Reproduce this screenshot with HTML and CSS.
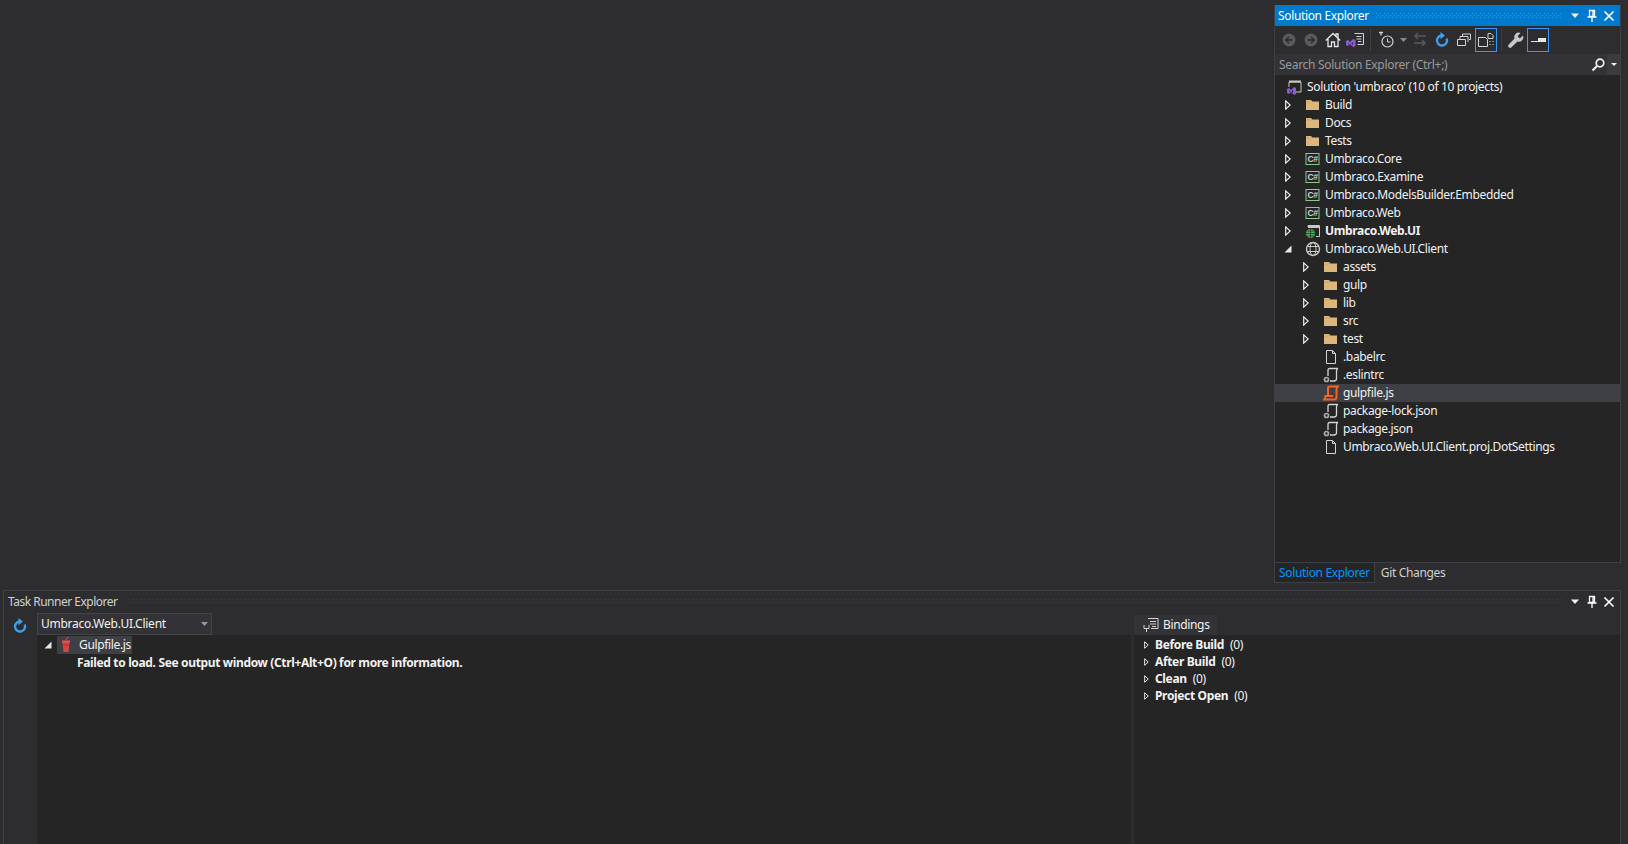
FILE: index.html
```html
<!DOCTYPE html>
<html lang="en">
<head>
<meta charset="utf-8">
<title>Visual Studio</title>
<link rel="stylesheet" href="styles.css">
</head>
<body>
<svg class="defs" width="0" height="0" aria-hidden="true">
  <defs>
    <symbol id="arrow" viewBox="0 0 6 10"><path d="M.7.9 5.200 5 .7 9.100Z" fill="none" stroke="#f0f0f0" stroke-width="1.200"/></symbol>
    <symbol id="open" viewBox="0 0 8 8"><path d="M7.500.5v7H.5Z" fill="#e6e6e6"/></symbol>
    <symbol id="folder" viewBox="0 0 16 16"><path d="M1 3h5l1.500 1.500H14V13H1Z" fill="#dcb67a"/><path d="M1.500 5h5" stroke="#c9a56c"/></symbol>
    <symbol id="cs" viewBox="0 0 16 16"><rect x="1" y="2.500" width="13" height="11" fill="#252526" stroke="#89c98a"/><text x="7.500" y="11" text-anchor="middle" font-family="Liberation Sans" font-size="8.500" font-weight="700" fill="#d0d0d0">C#</text></symbol>
    <symbol id="globe" viewBox="0 0 16 16"><g fill="none" stroke="#c8c8c8"><circle cx="8" cy="8" r="6.500" stroke-width="1.400"/><ellipse cx="8" cy="8" rx="3" ry="6.500"/><path d="M2 5.500h12M2 10.500h12"/></g></symbol>
    <symbol id="webui" viewBox="0 0 16 16"><path d="M3 4V2.500h11.500v11H11" fill="none" stroke="#c8c8c8"/><path d="M3 4h11" stroke="#c8c8c8" stroke-width="2"/><circle cx="5.500" cy="10.500" r="4.500" fill="#4fae5e"/><path d="M1 10.500h9M5.500 6v9M2 8h7M2 13h7" stroke="#252526" stroke-width=".7"/></symbol>
    <symbol id="solution" viewBox="0 0 16 16"><path d="M3 8V3h12v10H10" fill="none" stroke="#c8c8c8"/><path d="M3 2.500h12" stroke="#c8c8c8" stroke-width="2"/><path d="M1 10l2-1 2 2 3-3 2 1v6l-2 1-3-3-2 2-2-1Zm2 1.500v1.500l1-.7ZM7 11l-1.500 1.500L7 14Z" fill="#8a5bd6" fill-rule="evenodd"/></symbol>
    <symbol id="file" viewBox="0 0 16 16"><path d="M3.500 1.500h6l3 3v10h-9Z" fill="none" stroke="#d4d4d4"/><path d="M9.500 1.500v3h3" fill="none" stroke="#d4d4d4"/></symbol>
    <symbol id="script" viewBox="0 0 16 16"><path d="M5 9V3q0-1.500 1.500-1.500H15q-1.500.5-1.500 2.500v7.500q0 2.500-2.500 2.500H7" fill="none" stroke="#d4d4d4" stroke-width="1.300"/><circle cx="3.500" cy="12.500" r="2" fill="none" stroke="#a8a8a8" stroke-width="1.700"/></symbol>
    <symbol id="scriptjs" viewBox="0 0 16 16"><path d="M5 10V3q0-1.500 1.500-1.500H15q-1.500 1-1.500 2.500v8q0 2.500-2.500 2.500H1q1.500-1 1.500-3.500H10" fill="none" stroke="#f26522" stroke-width="2"/></symbol>
    <symbol id="cup" viewBox="0 0 16 16"><path d="M4.500 5h7l-1 10h-5Z" fill="#d64545"/><path d="M4 4.500h8" stroke="#e05252" stroke-width="2"/><path d="M8 4 9 .5 11 0" fill="none" stroke="#d64545"/><path d="M5 8h6" stroke="#a33636"/></symbol>
    <symbol id="refresh" viewBox="0 0 16 16"><path d="M8 3.500a5 5 0 1 0 4.600 3" fill="none" stroke="#3f9fe8" stroke-width="2.300"/><path d="M6.500 0v7.200l4.500-3.600Z" fill="#3f9fe8"/></symbol>
    <symbol id="vsdoc" viewBox="0 0 20 16"><path d="M9.500 1.500h9v11h-6" fill="none" stroke="#d4d4d4"/><path d="M11.500 4.500h5M11.500 7h5M13 9.500h3.500" stroke="#d4d4d4"/><path d="M1 9l2-1 2 2 3-3 2.500 1v6L8 15l-3-3-2 2-2-1Zm2 2v1.500l1-.7ZM8 10l-1.500 1.500L8 13Z" fill="#8a5bd6" fill-rule="evenodd"/></symbol>
    <symbol id="caret" viewBox="0 0 10 6"><path d="M1 .5h8L5 5Z" fill="#f1f1f1"/></symbol>
    <symbol id="pin" viewBox="0 0 12 14"><path d="M3.500 1.500h5v6h-5ZM7 1.500v6M1.500 8h9M6 8v5" fill="none" stroke="#fff" stroke-width="1.300"/></symbol>
    <symbol id="close" viewBox="0 0 12 12"><path d="M1.500 1.500l9 9M10.500 1.500l-9 9" stroke="#fff" stroke-width="1.700"/></symbol>
  </defs>
</svg>

<main class="app">
  <section class="top">
    <div class="se">
      <div class="se-main">
        <header class="title title-active">
          <span class="title-text">Solution Explorer</span>
          <span class="gripper gripper-blue"></span>
          <svg class="win-btn caret-btn"><use href="#caret"/></svg>
          <svg class="win-btn pin-btn"><use href="#pin"/></svg>
          <svg class="win-btn close-btn"><use href="#close"/></svg>
        </header>
        <div class="toolbar">
          <span class="tb"><svg width="16" height="16" viewBox="0 0 16 16"><circle cx="8" cy="8" r="6.500" fill="#5a5a5c"/><path d="M11.500 8h-6M8 5 5 8l3 3" fill="none" stroke="#2d2d30" stroke-width="1.600"/></svg></span>
          <span class="tb"><svg width="16" height="16" viewBox="0 0 16 16"><circle cx="8" cy="8" r="6.500" fill="#5a5a5c"/><path d="M4.500 8h6M8 5l3 3-3 3" fill="none" stroke="#2d2d30" stroke-width="1.600"/></svg></span>
          <span class="tb"><svg width="16" height="16" viewBox="0 0 16 16"><path d="M.8 8.500 8 1.500l7.200 7M3 7v7.500h3.500V10h3v4.500H13V7M11 4V2h2v4" fill="none" stroke="#e6e6e6" stroke-width="1.300"/></svg></span>
          <span class="tb"><svg width="20" height="16"><use href="#vsdoc"/></svg></span>
          <span class="tb-sep"></span>
          <span class="tb tb-clock"><svg width="18" height="18" viewBox="0 0 18 18"><path d="M1 1.500h4M3 1.500v3" stroke="#d4d4d4" stroke-width="1.300"/><circle cx="9.500" cy="10.500" r="5.500" fill="none" stroke="#d4d4d4" stroke-width="1.200"/><path d="M9.500 7.500v3.500h3" fill="none" stroke="#d4d4d4"/></svg></span>
          <span class="tb-caret"><svg width="7" height="4" viewBox="0 0 7 4"><path d="M0 0h7L3.500 4Z" fill="#8a8a8a"/></svg></span>
          <span class="tb"><svg width="16" height="16" viewBox="0 0 16 16"><path d="M14 4H3M6 1 3 4l3 3M2 11h11M10 8l3 3-3 3" fill="none" stroke="#5a5a5c" stroke-width="1.500"/></svg></span>
          <span class="tb"><svg width="16" height="16"><use href="#refresh"/></svg></span>
          <span class="tb"><svg width="16" height="16" viewBox="0 0 16 16"><path d="M1.500 7.500h8v6h-8ZM4 7V4.500h8V10M6.500 4V2h8v5.500H13" fill="none" stroke="#d4d4d4"/></svg></span>
          <span class="tb tb-on"><svg width="16" height="16" viewBox="0 0 16 16"><path d="M.5 5.500h7l2 2v7h-9Z" fill="none" stroke="#d4d4d4"/><path d="M10 1.500h3l2 2v3h-5Z" fill="none" stroke="#d4d4d4"/><path d="M12 9v1M12 12v1M15 9v1M15 12v1" stroke="#d4d4d4"/></svg></span>
          <span class="tb-sep tb-sep-narrow"></span>
          <span class="tb"><svg width="16" height="16" viewBox="0 0 16 16"><path d="M15 3.500 11.800 6.500 9.500 4.300 12.500 1A4.500 4.500 0 0 0 6.500 6.500L.8 12.500a1.800 1.800 0 0 0 2.700 2.700l6-5.700A4.500 4.500 0 0 0 15 3.500Z" fill="#c8c8c8"/></svg></span>
          <span class="tb tb-on"><svg width="15" height="5" viewBox="0 0 15 5"><path d="M0 3.500h15" stroke="#e6e6e6"/><path d="M7 0h8v4H7Z" fill="#e6e6e6"/></svg></span>
        </div>
        <div class="search">
          <span class="search-text">Search Solution Explorer (Ctrl+;)</span>
          <svg class="search-icon" width="14" height="14" viewBox="0 0 14 14"><circle cx="9" cy="5" r="3.800" fill="none" stroke="#f1f1f1" stroke-width="1.700"/><path d="M6 8 1.500 12.500" stroke="#f1f1f1" stroke-width="2.200"/></svg>
          <span class="search-drop"><svg width="6" height="3" viewBox="0 0 6 3"><path d="M0 0h6L3 3Z" fill="#f1f1f1"/></svg></span>
        </div>
        <ul class="tree">
          <li class="row row-solution"><svg class="ico"><use href="#solution"/></svg><span>Solution 'umbraco' (10 of 10 projects)</span></li>
          <li class="row"><svg class="arr"><use href="#arrow"/></svg><svg class="ico"><use href="#folder"/></svg><span>Build</span></li>
          <li class="row"><svg class="arr"><use href="#arrow"/></svg><svg class="ico"><use href="#folder"/></svg><span>Docs</span></li>
          <li class="row"><svg class="arr"><use href="#arrow"/></svg><svg class="ico"><use href="#folder"/></svg><span>Tests</span></li>
          <li class="row"><svg class="arr"><use href="#arrow"/></svg><svg class="ico"><use href="#cs"/></svg><span>Umbraco.Core</span></li>
          <li class="row"><svg class="arr"><use href="#arrow"/></svg><svg class="ico"><use href="#cs"/></svg><span>Umbraco.Examine</span></li>
          <li class="row"><svg class="arr"><use href="#arrow"/></svg><svg class="ico"><use href="#cs"/></svg><span>Umbraco.ModelsBuilder.Embedded</span></li>
          <li class="row"><svg class="arr"><use href="#arrow"/></svg><svg class="ico"><use href="#cs"/></svg><span>Umbraco.Web</span></li>
          <li class="row"><svg class="arr"><use href="#arrow"/></svg><svg class="ico"><use href="#webui"/></svg><strong>Umbraco.Web.UI</strong></li>
          <li class="row"><svg class="arr arr-open"><use href="#open"/></svg><svg class="ico"><use href="#globe"/></svg><span>Umbraco.Web.UI.Client</span></li>
          <li class="row lvl1"><svg class="arr"><use href="#arrow"/></svg><svg class="ico"><use href="#folder"/></svg><span>assets</span></li>
          <li class="row lvl1"><svg class="arr"><use href="#arrow"/></svg><svg class="ico"><use href="#folder"/></svg><span>gulp</span></li>
          <li class="row lvl1"><svg class="arr"><use href="#arrow"/></svg><svg class="ico"><use href="#folder"/></svg><span>lib</span></li>
          <li class="row lvl1"><svg class="arr"><use href="#arrow"/></svg><svg class="ico"><use href="#folder"/></svg><span>src</span></li>
          <li class="row lvl1"><svg class="arr"><use href="#arrow"/></svg><svg class="ico"><use href="#folder"/></svg><span>test</span></li>
          <li class="row lvl1 leaf"><svg class="ico"><use href="#file"/></svg><span>.babelrc</span></li>
          <li class="row lvl1 leaf"><svg class="ico"><use href="#script"/></svg><span>.eslintrc</span></li>
          <li class="row lvl1 leaf row-selected"><svg class="ico"><use href="#scriptjs"/></svg><span>gulpfile.js</span></li>
          <li class="row lvl1 leaf"><svg class="ico"><use href="#script"/></svg><span>package-lock.json</span></li>
          <li class="row lvl1 leaf"><svg class="ico"><use href="#script"/></svg><span>package.json</span></li>
          <li class="row lvl1 leaf"><svg class="ico"><use href="#file"/></svg><span>Umbraco.Web.UI.Client.proj.DotSettings</span></li>
        </ul>
      </div>
      <nav class="tabs">
        <span class="tab tab-active">Solution Explorer</span>
        <span class="tab">Git Changes</span>
      </nav>
    </div>
  </section>

  <section class="trx">
    <header class="title">
      <span class="title-text trx-title-text">Task Runner Explorer</span>
      <span class="gripper"></span>
      <svg class="win-btn caret-btn"><use href="#caret"/></svg>
      <svg class="win-btn pin-btn"><use href="#pin"/></svg>
      <svg class="win-btn close-btn"><use href="#close"/></svg>
    </header>
    <div class="trx-body">
      <div class="rail"><svg class="rail-icon" width="16" height="16"><use href="#refresh"/></svg></div>
      <div class="tasks">
        <div class="combo-bar">
          <div class="combo"><span class="combo-text">Umbraco.Web.UI.Client</span><svg width="7" height="4" viewBox="0 0 7 4"><path d="M0 0h7L3.500 4Z" fill="#999"/></svg></div>
        </div>
        <div class="task-tree">
          <div class="task-row">
            <svg class="task-arr"><use href="#open"/></svg>
            <span class="task-sel"><svg class="ico"><use href="#cup"/></svg><span>Gulpfile.js</span></span>
          </div>
          <div class="task-error">Failed to load. See output window (Ctrl+Alt+O) for more information.</div>
        </div>
      </div>
      <div class="bindings">
        <div class="bind-bar">
          <span class="bind-tab"><svg width="16" height="16" viewBox="0 0 16 16"><path d="M5 1.500h10v10H8M7 4.500h6M7 7h6M9 9.500h4" fill="none" stroke="#d4d4d4"/><path d="M1 8v3.500h5V8M3.500 11.500V15" fill="none" stroke="#d4d4d4"/></svg><span>Bindings</span></span>
        </div>
        <ul class="bind-list">
          <li class="bind-row"><svg class="arr"><use href="#arrow"/></svg><strong>Before Build</strong><span>(0)</span></li>
          <li class="bind-row"><svg class="arr"><use href="#arrow"/></svg><strong>After Build</strong><span>(0)</span></li>
          <li class="bind-row"><svg class="arr"><use href="#arrow"/></svg><strong>Clean</strong><span>(0)</span></li>
          <li class="bind-row"><svg class="arr"><use href="#arrow"/></svg><strong>Project Open</strong><span>(0)</span></li>
        </ul>
      </div>
    </div>
  </section>
</main>
</body>
</html>
```

FILE: styles.css
```css
* { box-sizing: border-box; }
html, body { margin: 0; height: 100%; }
body {
  background: #2d2d30;
  color: #f1f1f1;
  font: 12px/16px "Noto Sans", "Liberation Sans", sans-serif;
  letter-spacing: -0.35px;
  overflow: hidden;
}
ul { list-style: none; margin: 0; padding: 0; }
svg { display: block; flex: none; }
.defs { position: absolute; }

.app {
  height: 844px;
  display: flex;
  flex-direction: column;
  padding: 5px 7px 0 3px;
}

.top { height: 578px; display: flex; justify-content: flex-end; }
.se { width: 347px; display: flex; flex-direction: column; }
.se-main {
  height: 558px;
  display: flex;
  flex-direction: column;
  border: 1px solid #3f3f46;
  border-top: 0;
}

.title {
  height: 21px;
  flex: none;
  display: flex;
  align-items: center;
  padding: 0 5px 0 4px;
  color: #d0d0d0;
}
.title-active { background: #007acc; color: #fff; padding-left: 3px; }
.title-text { white-space: nowrap; }
.trx-title-text { letter-spacing: -0.5px; }
.gripper {
  flex: 1;
  height: 5px;
  margin: 0 8px 0 7px;
  --dot: #3e3e42;
  background:
    linear-gradient(90deg, var(--dot) 1px, transparent 1px) 0 0 / 4px 1px repeat-x,
    linear-gradient(90deg, var(--dot) 1px, transparent 1px) 2px 2px / 4px 1px repeat-x,
    linear-gradient(90deg, var(--dot) 1px, transparent 1px) 0 4px / 4px 1px repeat-x;
}
.gripper-blue { --dot: #3b9ad9; }
.win-btn { width: 10px; height: 6px; }
.pin-btn { width: 12px; height: 14px; margin-left: 6px; }
.close-btn { width: 12px; height: 12px; margin-left: 5px; }

.toolbar {
  height: 28px;
  flex: none;
  display: flex;
  align-items: center;
  padding-left: 3px;
}
.tb {
  width: 22px;
  height: 24px;
  display: flex;
  align-items: center;
  justify-content: center;
}
.tb-on { border: 1px solid #3399ff; background: #2d2d30; }
.tb-sep { width: 1px; height: 22px; background: #3f3f46; margin: 0 5px 0 4px; }
.tb-sep-narrow { margin: 0 3px 0 4px; }
.tb-caret { width: 10px; display: flex; justify-content: center; margin-right: 1px; }

.search {
  height: 21px;
  flex: none;
  display: flex;
  align-items: center;
  background: #333337;
  padding-left: 4px;
  color: #999;
  letter-spacing: -0.3px;
}
.search-text { flex: 1; }
.search-icon { margin-right: 2px; }
.search-drop {
  width: 13px;
  align-self: stretch;
  display: flex;
  align-items: center;
  justify-content: center;
  background: #3a3a3f;
}

.tree {
  flex: 1;
  background: #252526;
  padding-top: 3px;
}
.row {
  height: 18px;
  display: flex;
  align-items: center;
  padding-left: 10px;
  white-space: nowrap;
}
.row strong { font-weight: 700; }
.ico { width: 16px; height: 16px; margin-right: 4px; }
.arr { width: 6px; height: 10px; margin-right: 14px; }
.arr-open { height: 8px; width: 8px; margin-left: -1px; margin-right: 13px; }
.row-solution { padding-left: 11px; }
.row-solution .ico { margin-right: 5px; }
.lvl1 { padding-left: 28px; }
.leaf { padding-left: 48px; }
.row-selected { background: #3f3f46; }

.tabs {
  height: 20px;
  flex: none;
  display: flex;
}
.tab {
  padding: 0 6px;
  display: flex;
  align-items: center;
  color: #d0d0d0;
}
.tab-active {
  background: #252526;
  color: #0097fb;
  border: 1px solid #3f3f46;
  border-top: 0;
  padding: 0 4px;
}

.trx {
  margin-top: 7px;
  flex: 1;
  min-height: 0;
  display: flex;
  flex-direction: column;
  border: 1px solid #3f3f46;
  border-bottom: 0;
}
.trx-body { flex: 1; min-height: 0; display: flex; }
.rail { width: 33px; flex: none; padding: 5px 0 0 8px; }
.rail-icon { margin-top: 1px; }

.tasks { width: 1094px; flex: none; display: flex; flex-direction: column; }
.combo-bar { height: 23px; flex: none; }
.combo {
  width: 175px;
  height: 22px;
  margin-top: 1px;
  display: flex;
  align-items: center;
  justify-content: space-between;
  border: 1px solid #434346;
  background: #333337;
  padding: 0 3px 0 3px;
  letter-spacing: -0.25px;
}
.task-tree { flex: 1; background: #252526; padding-top: 1px; }
.task-row { height: 18px; display: flex; align-items: center; padding-left: 7px; }
.task-arr { width: 8px; height: 8px; margin-right: 5px; }
.task-sel {
  display: flex;
  align-items: center;
  height: 18px;
  padding-right: 1px;
  background: #3f3f46;
}
.task-sel .ico { margin: 0 4px 0 1px; }
.task-sel span { margin-left: 1px; }
.task-error { padding-left: 40px; font-weight: 700; height: 18px; line-height: 18px; }

.bindings {
  flex: 1;
  display: flex;
  flex-direction: column;
  border-left: 3px solid #2d2d30;
}
.bind-bar { height: 23px; flex: none; padding-top: 3px; }
.bind-tab {
  width: 83px;
  height: 20px;
  display: flex;
  align-items: center;
  gap: 4px;
  padding-left: 9px;
  background: #333337;
}
.bind-list { flex: 1; background: #252526; padding-top: 1px; }
.bind-row {
  height: 17px;
  display: flex;
  align-items: center;
  padding-left: 10px;
  white-space: nowrap;
}
.bind-row .arr { width: 5px; height: 8px; margin-right: 6px; }
.bind-row strong { margin-right: 6px; }
```
